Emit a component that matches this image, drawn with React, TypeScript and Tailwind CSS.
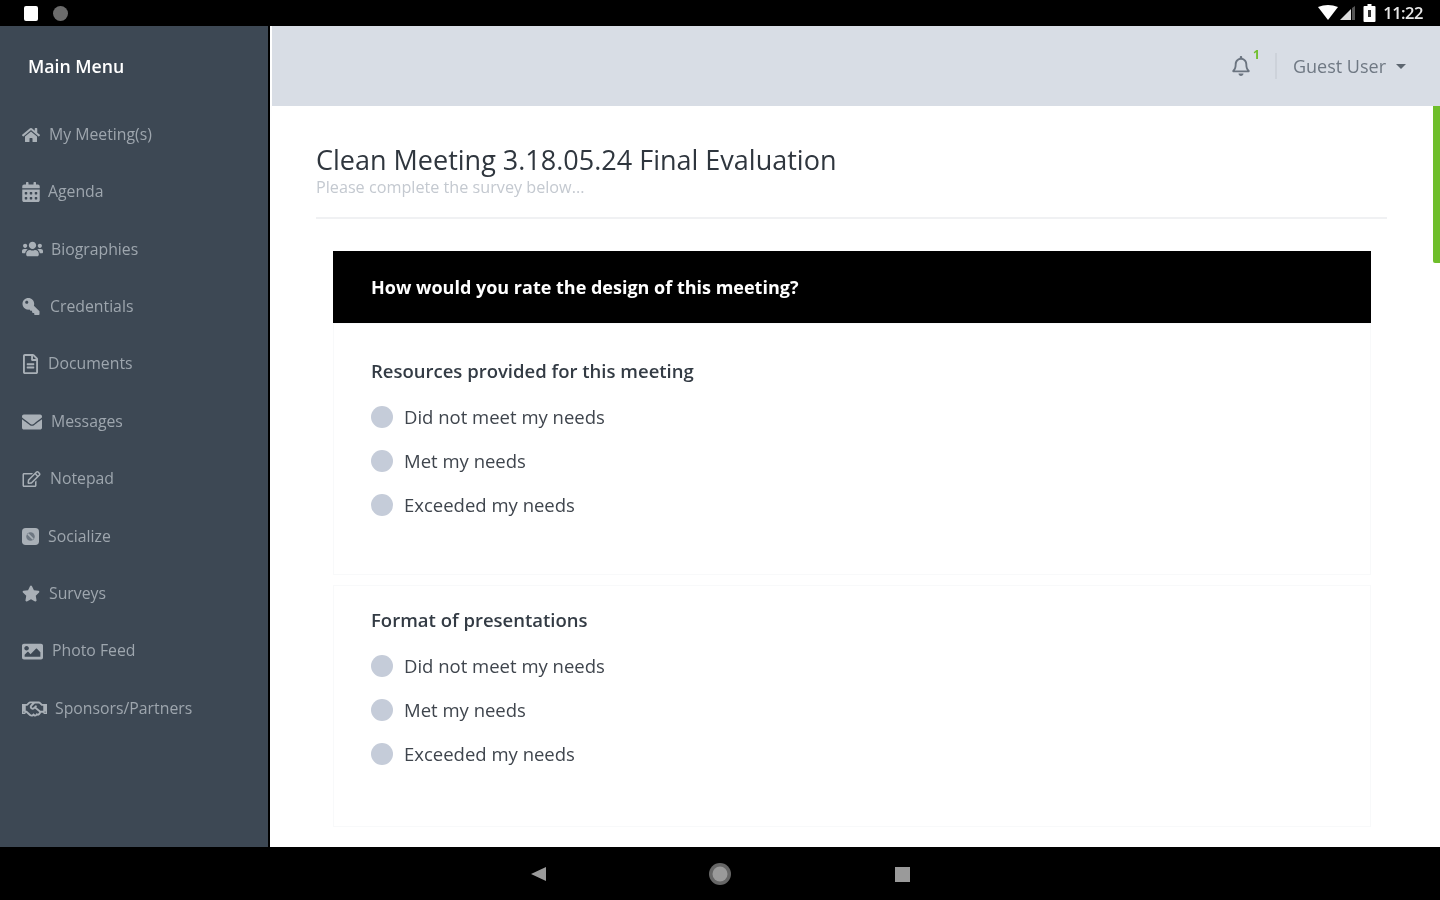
import { FaCalendarAlt, FaEnvelope, FaHome, FaImage, FaKey, FaRegBell, FaRegEdit, FaRegFileAlt, FaRegHandshake, FaStar, FaUsers } from "react-icons/fa";

// rounded square with a dark mark, the package has no match for this one
function SocialIcon({ className }: { className?: string }) {
  return (
    <svg viewBox="0 0 16 16" className={className}>
      <rect width="16" height="16" rx="3.5" fill="currentColor" />
      <circle cx="8" cy="8" r="4" fill="#6d7782" />
      <path d="M5.5 5.5 L10.5 10.5" stroke="#a9b0b7" strokeWidth="1.5" />
    </svg>
  );
}

const menu: { label: string; icon: React.ComponentType<{ className?: string }>; size: string; gap: string }[] = [
  { label: "My Meeting(s)", icon: FaHome, size: "w-[18px] h-[16px]", gap: "ml-[9px]" },
  { label: "Agenda", icon: FaCalendarAlt, size: "w-[18px] h-[20px]", gap: "ml-[8px]" },
  { label: "Biographies", icon: FaUsers, size: "w-[21px] h-[20px]", gap: "ml-[8px]" },
  { label: "Credentials", icon: FaKey, size: "w-[18px] h-[17px] -scale-x-100", gap: "ml-[10px]" },
  { label: "Documents", icon: FaRegFileAlt, size: "w-[17px] h-[20px]", gap: "ml-[9px]" },
  { label: "Messages", icon: FaEnvelope, size: "w-[20px] h-[20px]", gap: "ml-[9px]" },
  { label: "Notepad", icon: FaRegEdit, size: "w-[19px] h-[16px]", gap: "ml-[9px]" },
  { label: "Socialize", icon: SocialIcon, size: "w-[17px] h-[17px]", gap: "ml-[9px]" },
  { label: "Surveys", icon: FaStar, size: "w-[18px] h-[17px]", gap: "ml-[9px]" },
  { label: "Photo Feed", icon: FaImage, size: "w-[21px] h-[21px]", gap: "ml-[9px]" },
  { label: "Sponsors/Partners", icon: FaRegHandshake, size: "w-[25px] h-[20px]", gap: "ml-[8px]" },
];

const answers = ["Did not meet my needs", "Met my needs", "Exceeded my needs"];

function Question({ title, className }: { title: string; className: string }) {
  return (
    <div className={`ml-[17px] mr-[16px] border border-[#f8f9fa] pl-[37px] ${className}`}>
      <p className="text-[18.5px] leading-[24px] font-semibold text-[#333b44]">{title}</p>
      <div className="mt-[12px] flex flex-col">
        {answers.map((a) => (
          <div key={a} className="flex h-[44px] items-center">
            <span className="h-[22px] w-[22px] rounded-full bg-[#c5ccd9]" />
            <span className="ml-[11px] text-[18.5px] text-[#3f454d]">{a}</span>
          </div>
        ))}
      </div>
    </div>
  );
}

export default function App() {
  return (
    <div className="flex h-[900px] w-[1440px] flex-col overflow-hidden bg-black font-['Open_Sans',sans-serif] blur-[0.5px]">
      {/* android status bar */}
      <div className="flex h-[26px] items-center justify-between pl-[24px] pr-[17px]">
        <div className="flex items-center gap-[15px]">
          <span className="h-[15px] w-[14px] rounded-[2px] bg-white" />
          <span className="h-[15px] w-[15px] rounded-full bg-[#6b6b6b]" />
        </div>
        <div className="flex items-center text-white">
          <svg viewBox="0 0 38 16" className="h-[16px] w-[38px]">
            <path d="M0 2 Q10 -2 20 2 L10 15Z" fill="#fff" />
            <path d="M22 15 L33 4 V15Z" fill="#ddd" />
            <path d="M34 3 L37 1 V15 H34Z" fill="#555" />
          </svg>
          <svg viewBox="0 0 12 18" className="ml-[7px] h-[18px] w-[13px]">
            <path d="M4 0h4v2h3a1 1 0 0 1 1 1v14a1 1 0 0 1-1 1H1a1 1 0 0 1-1-1V3a1 1 0 0 1 1-1h3z" fill="#fff" />
            <rect x="4.5" y="6" width="3" height="7" fill="#333" />
          </svg>
          <span className="ml-[7px] text-[16.5px] leading-none font-semibold tracking-[-0.5px] text-[#e8e8e8]">11:22</span>
        </div>
      </div>

      <div className="flex min-h-0 flex-1">
        {/* sidebar */}
        <aside className="w-[268px] shrink-0 bg-[#3d4854]">
          <div className="flex h-[81px] items-center pl-[28px] text-[17.7px] font-semibold text-white">Main Menu</div>
          <nav className="-mt-[1px]">
            {menu.map(({ label, icon: Icon, size, gap }) => (
              <div key={label} className="flex h-[57.4px] items-center pl-[22px] text-[15.8px] text-[#9ea6ae]">
                <Icon className={`${size} shrink-0 text-[#a9b0b7]`} />
                <span className={gap}>{label}</span>
              </div>
            ))}
          </nav>
        </aside>
        <div className="w-[2px] shrink-0 bg-black" />

        {/* main area */}
        <div className="min-w-0 flex-1 bg-white">
          <header className="ml-[2px] flex h-[80px] items-center justify-end bg-[#d8dde5] pr-[34px]">
            <div className="relative">
              <FaRegBell className="h-[20px] w-[18px] text-[#6b7480]" />
              <span className="absolute -top-[7px] left-[21px] text-[12px] leading-none font-bold text-[#6fbe2b]">1</span>
            </div>
            <span className="ml-[25px] h-[26px] w-[2px] bg-[#cdd2da]" />
            <span className="ml-[16px] text-[18px] text-[#6f7883]">Guest User</span>
            <span className="ml-[10px] h-0 w-0 border-x-[5px] border-t-[5px] border-x-transparent border-t-[#5d6670]" />
          </header>

          <div className="relative h-[741px] overflow-hidden">
            <span className="absolute top-0 right-0 h-[157px] w-[7px] rounded-bl-[2px] bg-[#6fbe2b]" />
            <div className="ml-[46px] w-[1071px] pt-[37px]">
              <h1 className="text-[27px] leading-[34px] font-medium text-[#2f363e]">Clean Meeting 3.18.05.24 Final Evaluation</h1>
              <p className="text-[16.2px] leading-[20px] text-[#c4c9d0]">Please complete the survey below...</p>
              <div className="mt-[20px] h-[2px] bg-[#f0f1f3]" />
              <div className="ml-[17px] mr-[16px] mt-[32px] flex h-[72px] items-center bg-black pl-[38px] text-[18px] font-bold text-white">
                How would you rate the design of this meeting?
              </div>
              <Question title="Resources provided for this meeting" className="h-[252px] pt-[35px]" />
              <Question title="Format of presentations" className="mt-[10px] h-[242px] pt-[22px]" />
            </div>
          </div>
        </div>
      </div>

      {/* android nav bar */}
      <div className="flex h-[53px] items-center justify-center">
        <svg viewBox="0 0 400 24" className="h-[24px] w-[400px]">
          <path d="M11 12 L26 5 V19Z" fill="#9a9a9a" />
          <circle cx="200" cy="12" r="11" fill="#666" />
          <circle cx="200" cy="12" r="7.5" fill="#9a9a9a" />
          <rect x="375" y="5" width="15" height="15" fill="#9a9a9a" />
        </svg>
      </div>
    </div>
  );
}
